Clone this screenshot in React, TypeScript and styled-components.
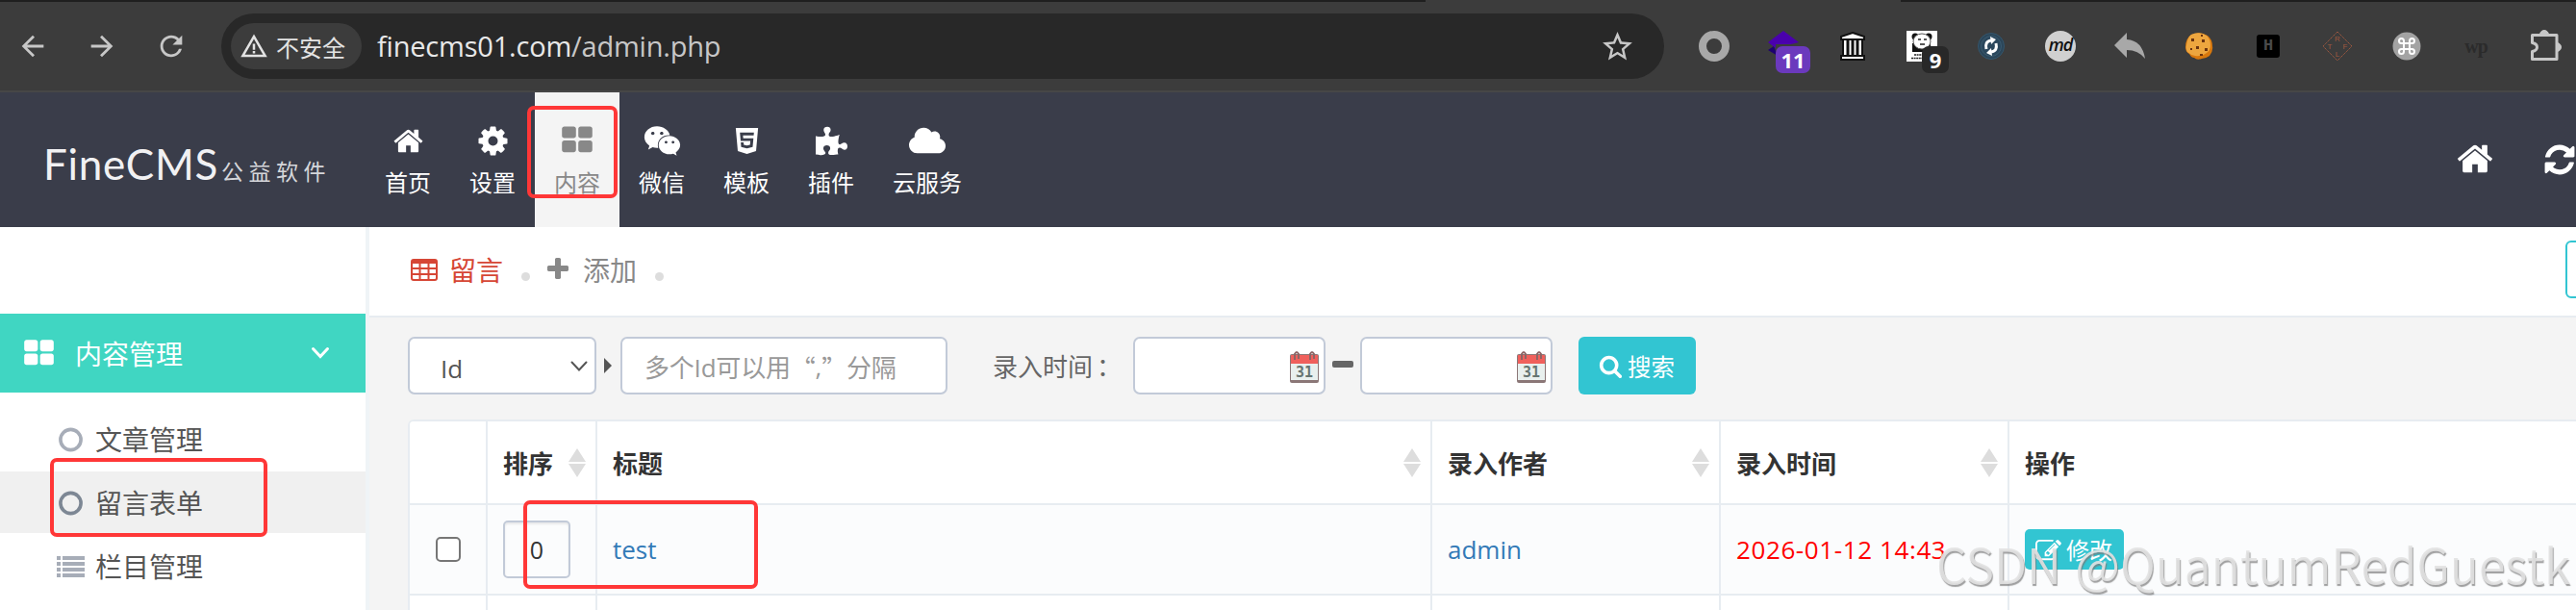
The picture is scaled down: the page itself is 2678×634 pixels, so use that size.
import React from "react";
import styled, { createGlobalStyle, css } from "styled-components";
import { FaCloud, FaHtml5, FaPuzzlePiece, FaWeixin } from "react-icons/fa";
import { MdArrowBack, MdArrowForward, MdRefresh, MdStarBorder, MdWarningAmber } from "react-icons/md";

const uiFont = `"Open Sans", "Noto Sans CJK SC", sans-serif`;

const GlobalStyle = createGlobalStyle`
  * { box-sizing: border-box; }
  body {
    margin: 0;
    overflow: hidden;
    font-family: ${uiFont};
  }
  input, button { font-family: inherit; margin: 0; }
  svg { flex-shrink: 0; }
`;

const icons = {
  home: "M1472 992v480q0 26-19 45t-45 19h-384v-384h-256v384h-384q-26 0-45-19t-19-45v-480q0-1 .5-3t.5-3l575-474 575 474q1 2 1 6zm223-69l-62 74q-8 9-21 11h-3q-13 0-21-7l-692-577-692 577q-12 8-24 7-13-2-21-11l-62-74q-8-10-7-23.5t11-21.5l719-599q32-26 76-26t76 26l244 204v-195q0-14 9-23t23-9h192q14 0 23 9t9 23v408l219 182q10 8 11 21.5t-7 23.5z",
  cog: "M1152 896q0-106-75-181t-181-75-181 75-75 181 75 181 181 75 181-75 75-181zm512-109v222q0 12-8 23t-20 13l-185 28q-19 54-39 91 35 50 107 138 10 12 10 25t-9 23q-27 37-99 108t-94 71q-12 0-26-9l-138-108q-44 23-91 38-16 136-29 186-7 28-36 28h-222q-14 0-24.5-8.5t-11.5-21.5l-28-184q-49-16-90-37l-141 107q-10 9-25 9-14 0-25-11-126-114-165-168-7-10-7-23 0-12 8-23 15-21 51-66.5t54-70.5q-27-50-41-99l-183-27q-13-2-21-12.5t-8-23.5v-222q0-12 8-23t19-13l186-28q14-46 39-92-40-57-107-138-10-12-10-24 0-10 9-23 26-36 98.5-107.5t94.5-71.5q13 0 26 10l138 107q44-23 91-38 16-136 29-186 7-28 36-28h222q14 0 24.5 8.5t11.5 21.5l28 184q49 16 90 37l142-107q9-9 24-9 13 0 25 10 129 119 165 170 7 8 7 22 0 12-8 23-15 21-51 66.5t-54 70.5q26 50 41 98l183 28q13 2 21 12.5t8 23.5z",
  large: "M832 1024v384q0 52-38 90t-90 38h-512q-52 0-90-38t-38-90v-384q0-52 38-90t90-38h512q52 0 90 38t38 90zm0-768v384q0 52-38 90t-90 38h-512q-52 0-90-38t-38-90v-384q0-52 38-90t90-38h512q52 0 90 38t38 90zm896 768v384q0 52-38 90t-90 38h-512q-52 0-90-38t-38-90v-384q0-52 38-90t90-38h512q52 0 90 38t38 90zm0-768v384q0 52-38 90t-90 38h-512q-52 0-90-38t-38-90v-384q0-52 38-90t90-38h512q52 0 90 38t38 90z",
  refresh: "M1639 1056q0 5-1 7-64 268-268 434.5t-478 166.5q-146 0-282.5-55t-243.5-157l-129 129q-19 19-45 19t-45-19-19-45v-448q0-26 19-45t45-19h448q26 0 45 19t19 45-19 45l-137 137q71 66 161 102t187 36q134 0 250-65t186-179q11-17 53-117 8-23 30-23h192q13 0 22.5 9.5t9.5 22.5zm25-800v448q0 26-19 45t-45 19h-448q-26 0-45-19t-19-45 19-45l138-138q-148-137-349-137-134 0-250 65t-186 179q-11 17-53 117-8 23-30 23h-199q-13 0-22.5-9.5t-9.5-22.5v-7q65-268 270-434.5t480-166.5q146 0 284 55.5t245 156.5l130-129q19-19 45-19t45 19 19 45z",
  plus: "M1600 736v192q0 40-28 68t-68 28h-416v416q0 40-28 68t-68 28h-192q-40 0-68-28t-28-68v-416h-416q-40 0-68-28t-28-68v-192q0-40 28-68t68-28h416v-416q0-40 28-68t68-28h192q40 0 68 28t28 68v416h416q40 0 68 28t28 68z",
  search: "M1216 832q0-185-131.5-316.5t-316.5-131.5-316.5 131.5-131.5 316.5 131.5 316.5 316.5 131.5 316.5-131.5 131.5-316.5zm512 832q0 52-38 90t-90 38q-54 0-90-38l-343-342q-179 124-399 124-143 0-273.5-55.5t-225-150-150-225-55.5-273.5 55.5-273.5 150-225 225-150 273.5-55.5 273.5 55.5 225 150 150 225 55.5 273.5q0 220-124 399l343 343q37 37 37 90z",
  edit: "M888 1184l116-116-152-152-116 116v56h96v96h56zm440-720q-16-16-33 1l-350 350q-17 17-1 33t33-1l350-350q17-17 1-33zm80 594v190q0 119-84.5 203.5t-203.5 84.5h-832q-119 0-203.5-84.5t-84.5-203.5v-832q0-119 84.5-203.5t203.5-84.5h832q63 0 117 25 15 7 18 23 3 17-9 29l-49 49q-14 14-32 8-23-6-45-6h-832q-66 0-113 47t-47 113v832q0 66 47 113t113 47h832q66 0 113-47t47-113v-126q0-13 9-22l64-64q15-15 35-7t20 29zm-96-738l288 288-672 672h-288v-288zm444 132l-92 92-288-288 92-92q28-28 68-28t68 28l152 152q28 28 28 68t-28 68z",
};

const Icon: React.FC<{ name: keyof typeof icons; size: number }> = ({ name, size }) => (
  <svg width={size} height={size} viewBox="0 0 1792 1792" fill="currentColor">
    <path d={icons[name]} />
  </svg>
);

const Page = styled.div`
  position: relative;
  width: 2678px;
  height: 634px;
  overflow: hidden;
  background: #fff;
`;

/* ---------- browser bar ---------- */

// bottom edge of the tab strip, open under the active tab
const TabStrip = styled.div`
  display: flex;
  justify-content: space-between;
  height: 2px;
  background: #3c3c3c;
`;

const TabEdge = styled.i<{ $width: number }>`
  width: ${(p) => p.$width}px;
  background: #1f1f1f;
`;

const BrowserBar = styled.header`
  display: flex;
  align-items: center;
  height: 94px;
  padding-left: 17px;
  background: #3c3c3c;
  border-bottom: 2px solid #474747;
  color: #c7c7c7;
`;

const NavButtons = styled.div`
  display: flex;
  flex-shrink: 0;
  gap: 38px;
  width: 213px;
`;

const AddressBar = styled.div`
  display: flex;
  flex-shrink: 0;
  align-items: center;
  width: 1500px;
  height: 68px;
  padding: 0 30px 0 10px;
  border-radius: 34px;
  background: #282828;
`;

const Chip = styled.div`
  display: flex;
  align-items: center;
  gap: 8px;
  width: 136px;
  height: 48px;
  padding-left: 9px;
  border-radius: 24px;
  background: #3c3c3c;
  color: #e3e3e3;
  font-size: 24px;
  white-space: nowrap;
`;

const Url = styled.div`
  flex: 1;
  margin: -2px 0 0 16px;
  color: #c7c7c7;
  font-size: 29px;
  letter-spacing: -0.2px;
  b { color: #e8e8e8; font-weight: 400; }
`;

const Extensions = styled.div`
  display: flex;
  flex-shrink: 0;
  margin-left: 16px;
`;

const Ext = styled.div`
  position: relative;
  display: flex;
  align-items: center;
  justify-content: center;
  width: 72px;
  height: 60px;
`;

const Badge = styled.span<{ $bg: string; $left: number; $width: number }>`
  position: absolute;
  top: 30px;
  left: ${(p) => p.$left}px;
  width: ${(p) => p.$width}px;
  height: 28px;
  border-radius: 7px;
  background: ${(p) => p.$bg};
  color: #fff;
  font-size: 22px;
  font-weight: 700;
  line-height: 29px;
  text-align: center;
`;

const Ring = styled.div`
  width: 32px;
  height: 32px;
  border: 8px solid #a8a8a8;
  border-radius: 50%;
`;

const MdMark = styled.div`
  width: 32px;
  height: 32px;
  border-radius: 50%;
  background: #d0d0d0;
  color: #111;
  font: italic 600 18px/29px "Open Sans", sans-serif;
  letter-spacing: -1px;
  text-align: center;
`;

const HMark = styled.div`
  width: 24px;
  height: 24px;
  border-radius: 3px;
  background: #000;
  color: #4a4a4a;
  font: 700 17px/24px "Liberation Mono", monospace;
  text-align: center;
`;

const WpMark = styled.div`
  color: #2b2b2b;
  font: 700 20px/24px "Liberation Serif", serif;
  letter-spacing: -1px;
`;

/* ---------- top navigation ---------- */

const TopNav = styled.nav`
  display: flex;
  height: 140px;
  background: #3a3d4a;
  color: #fff;
`;

const Logo = styled.div`
  display: flex;
  align-items: baseline;
  width: 380px;
  padding: 46px 0 0 45px;
  color: #f1f1f3;
  font: 400 44px/56px Lato, sans-serif;
  letter-spacing: 0.7px;
  white-space: nowrap;
  small {
    margin-left: 3px;
    font: 400 23px/30px "Noto Sans CJK SC", sans-serif;
    letter-spacing: 5.5px;
    color: #d5d6da;
  }
`;

const NavItem = styled.a<{ $active?: boolean }>`
  display: flex;
  flex-direction: column;
  align-items: center;
  padding: 33px 20px 0;
  font-size: 24px;
  line-height: 32px;
  white-space: nowrap;
  ${(p) => p.$active && css`
    background: #f4f4f4;
    color: #888;
  `}
`;

const NavIcon = styled.span`
  display: flex;
  align-items: center;
  height: 34px;
  margin-bottom: 11px;
`;

const NavTools = styled.div`
  display: flex;
  gap: 50px;
  margin: 0 -1px 0 auto;
  padding-top: 49px;
  svg + svg { margin-top: 3px; }
`;

/* ---------- sidebar ---------- */

const Body = styled.div`
  display: flex;
  height: 398px;
`;

const Sidebar = styled.aside`
  width: 384px;
  padding-top: 90px;
  border-right: 4px solid #eff4f7;
`;

const MenuHeader = styled.div`
  display: flex;
  align-items: center;
  height: 82px;
  margin-bottom: 16px;
  padding: 0 37px 0 24px;
  background: #40d6c2;
  color: #fff;
  font-size: 28px;
  span { flex: 1; margin: -1px 0 0 21px; }
`;

const MenuItem = styled.div<{ $active?: boolean }>`
  display: flex;
  align-items: center;
  height: 64px;
  margin-bottom: 2px;
  padding: 2px 0 0 59px;
  background: ${(p) => (p.$active ? "#f0f0f0" : "transparent")};
  color: #555;
  font-size: 28px;
  line-height: 40px;
`;

const MenuGlyph = styled.span<{ $active?: boolean }>`
  display: flex;
  width: 40px;
  color: ${(p) => (p.$active ? "#7d8794" : "#a7adb8")};
`;

/* ---------- content ---------- */

const Content = styled.main`
  flex: 1;
  min-width: 0;
  background: #f4f4f4;
`;

const Crumbs = styled.div`
  display: flex;
  align-items: center;
  height: 94px;
  padding: 0 0 4px 43px;
  border-bottom: 2px solid #e7ecf1;
  background: #fff;
  font-size: 28px;
`;

const Crumb = styled.a<{ $active?: boolean }>`
  display: flex;
  align-items: center;
  gap: 12px;
  color: ${(p) => (p.$active ? "#d64635" : "#888")};
`;

const Dot = styled.i`
  width: 9px;
  height: 9px;
  margin: 14px 15px 0 19px;
  border-radius: 50%;
  background: #ddd;
`;

const OutlineButton = styled.button`
  width: 120px;
  height: 60px;
  margin: 0 -109px 0 auto;
  border: 2px solid #32c5d2;
  border-radius: 6px;
  background: #fff;
`;

const Filters = styled.form`
  display: flex;
  align-items: center;
  height: 60px;
  margin: 20px 0 26px 40px;
  color: #666;
  font-size: 26px;
`;

const Field = styled.div<{ $width: number }>`
  display: flex;
  align-items: center;
  width: ${(p) => p.$width}px;
  height: 60px;
  border: 2px solid #c2cad8;
  border-radius: 7px;
  background: #fff;
`;

const SelectField = styled(Field)`
  justify-content: space-between;
  padding: 6px 6px 0 32px;
  color: #555;
  svg { margin-top: -5px; }
`;

const TextField = styled(Field)`
  padding: 2px 0 0 23px;
  color: #999;
  letter-spacing: -0.2px;
  white-space: nowrap;
`;

const WideQuote = styled.span`
  font-family: "Noto Sans CJK SC", sans-serif;
`;

const DateField = styled(Field)`
  justify-content: flex-end;
  padding: 4px 4px 0 0;
`;

const Caret = styled.i`
  margin: 0 9px 0 8px;
  border: solid transparent;
  border-width: 8px 0 8px 8px;
  border-left-color: #555;
`;

const FilterLabel = styled.label`
  width: 146px;
  margin-left: 47px;
  white-space: nowrap;
  span { margin-left: 4px; }
`;

const Dash = styled.i`
  width: 22px;
  height: 7px;
  margin: -4px 7px 0;
  border-radius: 2px;
  background: #666;
`;

const SearchButton = styled.button`
  display: flex;
  align-items: center;
  gap: 5px;
  width: 122px;
  height: 60px;
  margin-left: 27px;
  padding: 0 0 0 21px;
  border: 0;
  border-radius: 6px;
  background: #32c5d2;
  color: #fff;
  font-size: 24.5px;
  white-space: nowrap;
`;

const Grid = styled.div`
  width: 2400px;
  margin-left: 40px;
  border: 2px solid #e7ecf1;
  border-radius: 6px 0 0 0;
  overflow: hidden;
`;

const Row = styled.div<{ $height: number; $tint?: boolean }>`
  display: grid;
  grid-template-columns: 81px 114px 868px 300px 300px 1fr;
  height: ${(p) => p.$height}px;
  border-bottom: 2px solid #e7ecf1;
  background: ${(p) => (p.$tint ? "#fbfcfd" : "#fff")};
`;

const Cell = styled.div<{ $color?: string; $spacing?: number }>`
  display: flex;
  align-items: center;
  padding: 0 10px 0 16px;
  border-right: 2px solid #e7ecf1;
  color: ${(p) => p.$color ?? "#333"};
  font-size: 26px;
  letter-spacing: ${(p) => p.$spacing ?? 0}px;
  white-space: nowrap;
`;

const HeadCell = styled(Cell)`
  justify-content: space-between;
  padding-top: 1px;
  font-weight: 700;
`;

const CheckBox = styled.input`
  appearance: none;
  width: 26px;
  height: 26px;
  margin-left: 11px;
  border: 2px solid #767676;
  border-radius: 5px;
  background: #fff;
`;

const OrderInput = styled.input`
  width: 70px;
  height: 60px;
  border: 2px solid #c2cad8;
  border-radius: 5px;
  background: transparent;
  box-shadow: inset 0 2px 2px rgba(0, 0, 0, 0.08);
  color: #333;
  font-size: 25px;
  text-align: center;
`;

const EditButton = styled.button`
  display: flex;
  align-items: center;
  gap: 5px;
  width: 103px;
  height: 42px;
  padding: 2px 0 0 11px;
  border: 0;
  border-radius: 5px;
  background: #32c5d2;
  color: #fff;
  font-size: 24px;
  line-height: 30px;
  white-space: nowrap;
`;

/* hand-drawn marks laid over the page */
const Mark = styled.div<{ $x: number; $y: number; $w: number; $h: number }>`
  position: absolute;
  left: ${(p) => p.$x}px;
  top: ${(p) => p.$y}px;
  width: ${(p) => p.$w}px;
  height: ${(p) => p.$h}px;
  border: 4px solid #ff3737;
  border-radius: 7px;
`;

const Watermark = styled.div`
  position: absolute;
  left: 2013px;
  top: 555px;
  color: rgba(226, 226, 226, 0.9);
  font: 350 50px/60px "Noto Sans CJK SC", sans-serif;
  word-spacing: 3px;
  text-shadow: 1px 2px 1px rgba(120, 120, 120, 0.7);
  white-space: nowrap;
`;

const Sorter = () => (
  <svg width="18" height="30" viewBox="0 0 18 30" fill="#ddd">
    <path d="M9 0l9 14H0zM9 30l9-14H0z" />
  </svg>
);

const Calendar = () => (
  <svg width="32" height="34" viewBox="0 0 32 34">
    <rect x="1" y="3" width="30" height="30" rx="2" fill="#8b7777" />
    <rect x="2" y="12" width="28" height="18" fill="#e9f0ee" />
    <path d="M2 4h28v9H2z" fill="#f0605c" />
    <path d="M6 9V3q2-4 4 0v5M22 9V3q2-4 4 0v5" fill="none" stroke="#8d6565" strokeWidth="2" />
    <text x="16" y="27" textAnchor="middle" fontFamily="DejaVu Sans Mono" fontWeight="700" fontSize="15" fill="#667571">31</text>
  </svg>
);

const TableIcon = () => (
  <svg width="28" height="24" viewBox="0 0 28 24" fill="none" stroke="currentColor" strokeWidth="2">
    <rect x="1" y="2" width="26" height="21" rx="2" />
    <path d="M1 4h26" strokeWidth="4" />
    <path d="M1 11h26M1 17h26M9.5 4v19M18.5 4v19" />
  </svg>
);

const ListIcon = () => (
  <svg width="29" height="24" viewBox="0 0 29 24" fill="currentColor">
    <path d="M0 1h4v4H0zM6 1h23v4H6zM0 7h4v4H0zM6 7h23v4H6zM0 13h4v4H0zM6 13h23v4H6zM0 19h4v4H0zM6 19h23v4H6z" />
  </svg>
);

const CircleIcon = () => (
  <svg width="28" height="28" viewBox="0 0 28 28" fill="none" stroke="currentColor" strokeWidth="3.6">
    <circle cx="14.5" cy="14" r="10.6" />
  </svg>
);

const Chevron: React.FC<{ width?: number }> = ({ width = 2 }) => (
  <svg width="20" height="14" viewBox="0 0 20 14" fill="none" stroke="currentColor" strokeWidth={width} strokeLinecap="round">
    <path d="M2.5 2.5l7.5 8 7.5-8" />
  </svg>
);

const navItems = [
  { label: "首页", icon: <Icon name="home" size={33} /> },
  { label: "设置", icon: <Icon name="cog" size={35} /> },
  { label: "内容", icon: <Icon name="large" size={34} />, active: true },
  { label: "微信", icon: <FaWeixin size={39} /> },
  { label: "模板", icon: <FaHtml5 size={31} /> },
  { label: "插件", icon: <FaPuzzlePiece size={33} /> },
  { label: "云服务", icon: <FaCloud size={38} /> },
];

const menuItems = [
  { label: "文章管理", icon: <CircleIcon /> },
  { label: "留言表单", icon: <CircleIcon />, active: true },
  { label: "栏目管理", icon: <ListIcon /> },
];

const ExtensionBar = () => (
  <Extensions>
    <Ext><Ring /></Ext>
    <Ext>
      <svg width="32" height="32" viewBox="0 0 32 32">
        <path d="M0 20l6-4 4 10z" fill="#1d0070" />
        <path d="M16 0l16 12-8 2H8v4L0 12z" fill="#4a00ad" />
      </svg>
      <Badge $bg="#6b39bd" $left={28} $width={36}>11</Badge>
    </Ext>
    <Ext>
      <svg width="28" height="32" viewBox="0 0 28 32" stroke="#111" strokeWidth="2" fill="#fff">
        <path d="M14 2l12 4v3H2V6zM4 9h20v17H4zM2 26h24v4H2z" />
        <path d="M9 10v15M14 10v15M19 10v15" strokeWidth="3" />
      </svg>
    </Ext>
    <Ext>
      <svg width="32" height="32" viewBox="0 0 32 32">
        <path d="M0 0h32v32H0z" fill="#fff" />
        <path d="M6 13h19v9H6z" fill="#111" />
        <circle cx="9" cy="6" r="3.5" fill="#111" />
        <circle cx="23" cy="6" r="3.5" fill="#111" />
        <ellipse cx="16" cy="11" rx="9" ry="8" fill="#fff" stroke="#555" />
        <path d="M12 9h3M18 9h3M14 14h5" stroke="#222" strokeWidth="1.4" />
        <path d="M8 25h8M5 28.5h12" stroke="#222" strokeWidth="1.5" strokeDasharray="2 .6" />
      </svg>
      <Badge $bg="#282828" $left={36} $width={28}>9</Badge>
    </Ext>
    <Ext>
      <svg width="30" height="30" viewBox="0 0 30 30">
        <circle cx="15" cy="15" r="13.5" fill="#2b4558" stroke="#33566d" />
        <circle cx="15" cy="15" r="10.5" fill="#2b475c" stroke="#3a5b70" />
        <path d="M10 18q-2-8 5-9M20 12q2 8-5 9" fill="none" stroke="#fff" strokeWidth="3" />
        <path d="M14 5l6 3-5 5zM16 25l-6-3 5-5z" fill="#fff" />
      </svg>
    </Ext>
    <Ext><MdMark>md</MdMark></Ext>
    <Ext>
      <svg width="32" height="28" viewBox="0 0 32 28" fill="#a8a8a8">
        <path d="M0 13L13 0v7q16 1 19 20-7-9-19-9v8z" />
      </svg>
    </Ext>
    <Ext>
      <svg width="30" height="30" viewBox="0 0 30 30">
        <path d="M7 3Q16-1 24 4q5 4 5 11 1 5-3 10-4 3-8 3-5 2-8-1-3 0-5-4-4-2-4-7Q1 7 7 3z" fill="#d9780d" />
        <path d="M7 3q8-4 16 1 4 4 4 10 0 5-4 8-5 4-12 3-5-1-8-4-2-3-1-7 1-8 5-11z" fill="#eda63f" />
        <path d="M7 7h3v3H7zM18 8h3v3h-3zM12 15h3v3h-3zM21 17h3v3h-3zM6 17h2v2H6zM16 23h3v2h-3zM17 3h2v2h-2z" fill="#6b3410" />
      </svg>
    </Ext>
    <Ext><HMark>H</HMark></Ext>
    <Ext>
      <svg width="32" height="32" viewBox="0 0 32 32" fill="#a0593f" fontFamily="Liberation Sans" fontSize="8" textAnchor="middle">
        <path d="M16 1l15 15-15 15L1 16z" fill="none" stroke="#a0593f" strokeDasharray="1.5 .7" />
        <text x="16" y="11">R</text>
        <text x="8" y="19">T</text>
        <text x="24" y="19">F</text>
        <text x="16" y="27">L</text>
      </svg>
    </Ext>
    <Ext>
      <svg width="30" height="30" viewBox="0 0 30 30">
        <circle cx="15" cy="15" r="14.5" fill="#a3a3a3" />
        <path d="M12 12V9.5A2.5 2.5 0 1 0 9.5 12h11A2.5 2.5 0 1 0 18 9.5v11a2.5 2.5 0 1 0 2.5-2.5h-11a2.5 2.5 0 1 0 2.5 2.5z" fill="none" stroke="#fff" strokeWidth="2" />
      </svg>
    </Ext>
    <Ext><WpMark>wp</WpMark></Ext>
    <Ext>
      <svg width="34" height="36" viewBox="0 0 34 36" fill="none" stroke="#c7c7c7" strokeWidth="3">
        <path d="M4 6.5h25v25H3.5v-8q5-1 5-4.5t-5-4.5v-8z" strokeLinejoin="round" />
        <path d="M11.5 6a4.5 4.5 0 0 1 9 0zM29 14.5a4.5 4.5 0 0 1 0 9z" fill="#c7c7c7" strokeWidth="1" />
      </svg>
    </Ext>
  </Extensions>
);

const App: React.FC = () => {
  return (
    <Page>
      <GlobalStyle />
      <TabStrip>
        <TabEdge $width={1482} />
        <TabEdge $width={702} />
      </TabStrip>
      <BrowserBar>
        <NavButtons>
          <MdArrowBack size={34} />
          <MdArrowForward size={34} />
          <MdRefresh size={34} />
        </NavButtons>
        <AddressBar>
          <Chip><MdWarningAmber size={30} />不安全</Chip>
          <Url><b>finecms01.com</b>/admin.php</Url>
          <MdStarBorder size={37} />
        </AddressBar>
        <ExtensionBar />
      </BrowserBar>

      <TopNav>
        <Logo>FineCMS<small>公益软件</small></Logo>
        {navItems.map((item) => (
          <NavItem key={item.label} $active={item.active}>
            <NavIcon>{item.icon}</NavIcon>
            {item.label}
          </NavItem>
        ))}
        <NavTools>
          <Icon name="home" size={40} />
          <Icon name="refresh" size={36} />
        </NavTools>
      </TopNav>

      <Body>
        <Sidebar>
          <MenuHeader>
            <Icon name="large" size={33} />
            <span>内容管理</span>
            <Chevron width={3} />
          </MenuHeader>
          {menuItems.map((item) => (
            <MenuItem key={item.label} $active={item.active}>
              <MenuGlyph $active={item.active}>{item.icon}</MenuGlyph>
              {item.label}
            </MenuItem>
          ))}
        </Sidebar>

        <Content>
          <Crumbs>
            <Crumb $active><TableIcon />留言</Crumb>
            <Dot />
            <Crumb><Icon name="plus" size={28} />添加</Crumb>
            <Dot />
            <OutlineButton />
          </Crumbs>

          <Filters>
            <SelectField $width={196}>Id<Chevron /></SelectField>
            <Caret />
            <TextField $width={340}>
              多个Id可以用<WideQuote lang="zh-CN">“</WideQuote>,<WideQuote lang="zh-CN">”</WideQuote>分隔
            </TextField>
            <FilterLabel>录入时间<span>：</span></FilterLabel>
            <DateField $width={200}><Calendar /></DateField>
            <Dash />
            <DateField $width={200}><Calendar /></DateField>
            <SearchButton type="button"><Icon name="search" size={25} />搜索</SearchButton>
          </Filters>

          <Grid>
            <Row $height={87}>
              <HeadCell />
              <HeadCell>排序<Sorter /></HeadCell>
              <HeadCell>标题<Sorter /></HeadCell>
              <HeadCell>录入作者<Sorter /></HeadCell>
              <HeadCell>录入时间<Sorter /></HeadCell>
              <HeadCell>操作</HeadCell>
            </Row>
            <Row $height={94} $tint>
              <Cell><CheckBox type="checkbox" /></Cell>
              <Cell><OrderInput defaultValue="0" /></Cell>
              <Cell $color="#337ab7">test</Cell>
              <Cell $color="#337ab7">admin</Cell>
              <Cell $color="#f00" $spacing={0.6}>2026-01-12 14:43</Cell>
              <Cell><EditButton><Icon name="edit" size={27} />修改</EditButton></Cell>
            </Row>
            <Row $height={94}>
              <Cell /><Cell /><Cell /><Cell /><Cell /><Cell />
            </Row>
          </Grid>
        </Content>
      </Body>

      <Mark $x={548} $y={110} $w={94} $h={96} />
      <Mark $x={52} $y={476} $w={226} $h={82} />
      <Mark $x={544} $y={520} $w={244} $h={92} />
      <Watermark>CSDN @QuantumRedGuestk</Watermark>
    </Page>
  );
};

export default App;
